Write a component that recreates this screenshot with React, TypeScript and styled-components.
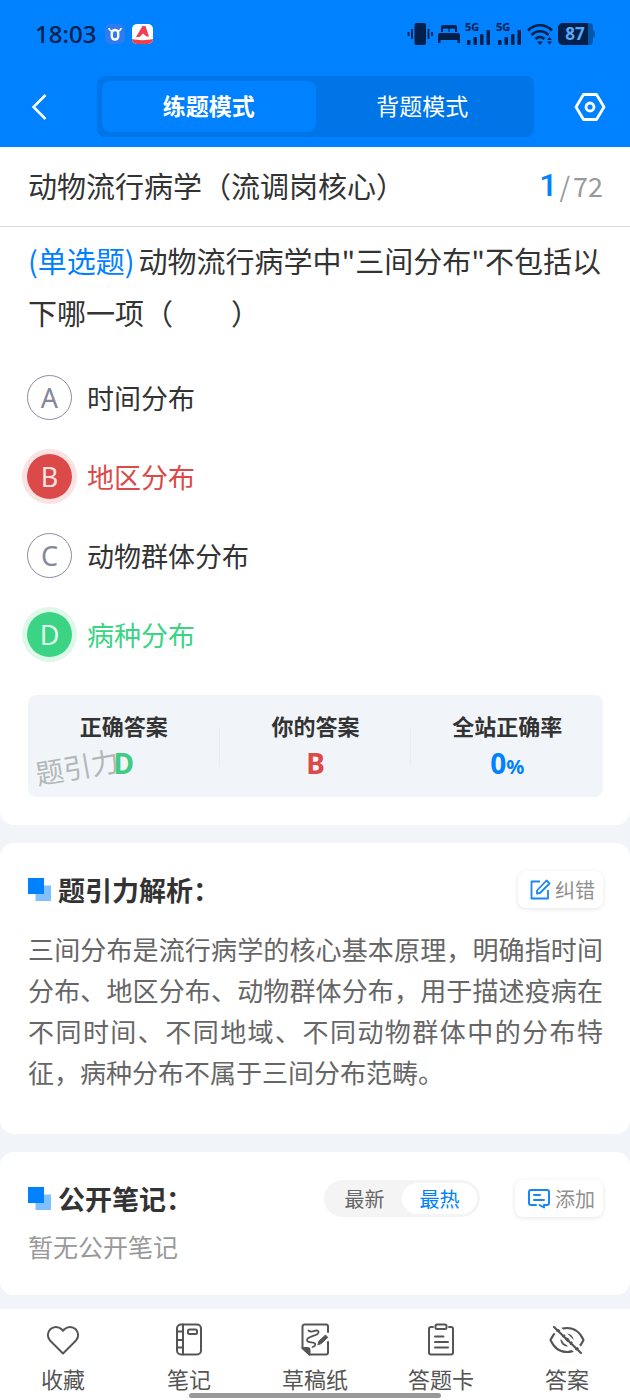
import React, { useState } from 'react';
import styled, { createGlobalStyle, css } from 'styled-components';

const GlobalStyle = createGlobalStyle`
  *, *::before, *::after { box-sizing: border-box; }
  body {
    margin: 0;
    background: #f1f5f9;
    color: #333;
    font-family: "Noto Sans CJK SC", "Noto Sans", sans-serif;
  }
  button {
    margin: 0;
    padding: 0;
    border: 0;
    background: none;
    color: inherit;
    font: inherit;
    cursor: pointer;
  }
  h1, h2, p, dl, dd, dt, fieldset { margin: 0; padding: 0; border: 0; font: inherit; }
  svg { display: block; flex: none; }
`;

const Page = styled.div`
  min-height: 100vh;
  display: flex;
  flex-direction: column;
`;

const Header = styled.header`
  background: #0081ff;
  color: #fff;
`;

const StatusBar = styled.div`
  display: flex;
  align-items: center;
  justify-content: space-between;
  height: 68px;
  padding: 0 35px;
  color: #03204a;
`;

const StatusGroup = styled.div<{ $gap: number }>`
  display: flex;
  align-items: center;
  gap: ${(p) => p.$gap}px;
`;

const Clock = styled.time`
  font: 500 24px/34px "Noto Sans", sans-serif;
`;

const TopNav = styled.div`
  display: grid;
  grid-template-columns: 97px 1fr 96px;
  align-items: center;
  padding: 8px 0 10px;
`;

const IconButton = styled.button<{ $end?: boolean }>`
  justify-self: ${(p) => (p.$end ? 'end' : 'start')};
  padding: 8px 24px;
`;

const ModeTabs = styled.div`
  display: grid;
  grid-template-columns: 1fr 1fr;
  padding: 5px;
  border-radius: 8px;
  background: #0075e7;
`;

const ModeTab = styled.button<{ $active: boolean }>`
  height: 51px;
  padding-bottom: 3px;
  border-radius: 8px;
  font-size: 23px;
  line-height: 34px;
  font-weight: ${(p) => (p.$active ? 700 : 400)};
  background: ${(p) => (p.$active ? '#0081ff' : 'transparent')};
`;

const TitleRow = styled.div`
  display: flex;
  align-items: center;
  justify-content: space-between;
  padding: 17px 27px 19px 28px;
  border-bottom: 1px solid #dcdcdc;
  background: #fff;
`;

const Title = styled.h1`
  font-size: 29px;
  line-height: 43px;
`;

const Counter = styled.div`
  display: flex;
  align-items: center;
  gap: 2px;
  color: #999;
  font-size: 27px;
  line-height: 43px;
`;

const CounterCurrent = styled.span`
  color: #0081ff;
  font: 500 32px/43px Roboto, sans-serif;
`;

const CounterTotal = styled.span`
  display: flex;
  gap: 3px;
`;

const Main = styled.main`
  display: flex;
  flex-direction: column;
  gap: 18px;
  padding-bottom: 14px;
`;

const Card = styled.section<{ $first?: boolean; $bottom: number }>`
  padding: ${(p) => (p.$first ? 7 : 28)}px 27px ${(p) => p.$bottom}px 28px;
  border-radius: ${(p) => (p.$first ? '0 0 14px 14px' : '14px')};
  background: #fff;
`;

const Question = styled.p`
  font-size: 29px;
  line-height: 52px;
`;

const QuestionType = styled.span`
  margin-right: 4px;
  color: #0081ff;
`;

const Options = styled.fieldset`
  display: flex;
  flex-direction: column;
  gap: 34px;
  margin: 37px 0 38px;
`;

type Tone = 'plain' | 'wrong' | 'right';

const Option = styled.label<{ $tone: Tone }>`
  position: relative;
  display: flex;
  align-items: center;
  gap: 15px;
  font-size: 27px;
  line-height: 45px;
  cursor: pointer;
  color: ${(p) => ({ plain: '#333', wrong: '#dc4949', right: '#3ad484' })[p.$tone]};
`;

const OptionInput = styled.input`
  position: absolute;
  width: 44px;
  height: 45px;
  margin: 0;
  opacity: 0;
`;

const OptionBadge = styled.span<{ $tone: Tone }>`
  flex: none;
  width: 45px;
  height: 45px;
  margin-left: -1px;
  border-radius: 50%;
  text-align: center;
  font: 400 27px/45px "Noto Sans", sans-serif;
  ${(p) =>
    p.$tone === 'plain' &&
    css`
      border: 1px solid #8a8ca6;
      line-height: 43px;
      color: #85889c;
    `}
  ${(p) =>
    p.$tone === 'wrong' &&
    css`
      background: #dc4949;
      color: #fbe3e3;
      box-shadow: 0 0 0 5px #fbe2e2;
    `}
  ${(p) =>
    p.$tone === 'right' &&
    css`
      background: #3ad484;
      color: #e3faee;
      box-shadow: 0 0 0 5px #dff8ea;
    `}
`;

const Stats = styled.dl`
  position: relative;
  display: grid;
  grid-template-columns: repeat(3, 1fr);
  padding: 13px 0 12px;
  border-radius: 8px;
  background: #f1f5f9;
`;

const Watermark = styled.span`
  position: absolute;
  left: 7px;
  top: 51px;
  font-size: 28px;
  line-height: 40px;
  color: #b4b7ba;
  transform: rotate(-10deg);
`;

const Stat = styled.div`
  position: relative;
  text-align: center;
  & + &::before {
    content: "";
    position: absolute;
    left: -1px;
    top: 20px;
    width: 1px;
    height: 38px;
    background: #e9edf1;
  }
`;

const StatLabel = styled.dt`
  font-size: 22px;
  line-height: 34px;
  font-weight: 700;
`;

const StatValue = styled.dd<{ $color: string }>`
  height: 43px;
  font: 700 28px/43px "Noto Sans", sans-serif;
  color: ${(p) => p.$color};
`;

const Percent = styled.span`
  font-size: 20px;
  line-height: 20px;
`;

const CardHead = styled.div`
  display: flex;
  align-items: center;
  gap: 35px;
`;

const Heading = styled.h2`
  display: flex;
  align-items: center;
  gap: 7px;
  margin-right: auto;
  font-size: 27px;
  line-height: 37px;
  font-weight: 700;
`;

const ActionButton = styled.button`
  display: flex;
  align-items: center;
  gap: 4px;
  height: 37px;
  padding: 0 8px 0 12px;
  border-radius: 8px;
  background: #fff;
  box-shadow: 0 1px 5px rgba(0, 0, 0, 0.1);
  font-size: 20px;
  line-height: 36px;
  color: #8f8f8f;
`;

const SortSwitch = styled.div`
  display: flex;
  padding: 3px;
  border-radius: 19px;
  background: #f4f4f4;
`;

const SortButton = styled.button<{ $active: boolean }>`
  width: 75px;
  height: 31px;
  border-radius: 16px;
  font-size: 20px;
  line-height: 31px;
  color: ${(p) => (p.$active ? '#0081ff' : '#666')};
  background: ${(p) => (p.$active ? '#fff' : 'transparent')};
`;

const Analysis = styled.p`
  margin-top: 20px;
  font-size: 26px;
  line-height: 41px;
  text-align: justify;
  color: #666;
`;

const EmptyNote = styled.p`
  margin-top: 9px;
  font-size: 25px;
  line-height: 41px;
  color: #999;
`;

const BottomNav = styled.nav`
  position: sticky;
  bottom: 0;
  display: grid;
  grid-template-columns: repeat(5, 1fr);
  margin-top: auto;
  padding: 14px 0 4px;
  background: #fff;
`;

const NavButton = styled.button`
  display: flex;
  flex-direction: column;
  align-items: center;
  gap: 5px;
  padding-bottom: 1px;
  font-size: 22px;
  line-height: 33px;
  color: #555;
`;

const HomeIndicator = styled.span`
  position: absolute;
  left: 30%;
  right: 30%;
  bottom: 2px;
  height: 5px;
  border-radius: 3px;
  background: #999;
`;

const NavSvg = ({ children, w = 34 }: { children: React.ReactNode; w?: number }) => (
  <svg width={w} height="34" viewBox={`0 0 ${w} 34`} fill="none" stroke="#555" strokeWidth="2" strokeLinecap="round" strokeLinejoin="round" aria-hidden="true">
    {children}
  </svg>
);

const HeartIcon = () => (
  <NavSvg>
    <path d="M17 30.5 4 17.5A8.1 8.1 0 0 1 15.6 6.2L17 7.7l1.4-1.5A8.1 8.1 0 0 1 30 17.5Z" />
  </NavSvg>
);

const NotebookIcon = () => (
  <NavSvg>
    <rect x="5" y="1.5" width="24" height="30" rx="4" />
    <path d="M11 1.5v30M5 8.5h6M5 17h6M5 24.5h6" />
    <rect x="16" y="6.5" width="9" height="4.500" rx="1.500" />
  </NavSvg>
);

const DraftIcon = () => (
  <NavSvg>
    <path d="M30 9V3.500a2 2 0 0 0-2-2H6.500a2 2 0 0 0-2 2V25l7 6.500H28a2 2 0 0 0 2-2V19" />
    <path d="M4.500 25h5a2 2 0 0 1 2 2v4.500Z" fill="#555" />
    <path d="M10.500 7.500C14 11 19 5 20.500 8.500 22 13 9 12.500 9 17c0 3.500 6.500 1.500 8 3.500 1 1.500-.5 3-2.500 3.500" strokeWidth="1.800" />
    <path d="m20 21.500 1-3.500 6.500-6 2.300 2.400-6.500 6Z" fill="#555" strokeWidth="1" />
  </NavSvg>
);

const SheetIcon = () => (
  <NavSvg>
    <path d="M9 4H7a2 2 0 0 0-2 2v23.500a2 2 0 0 0 2 2h20a2 2 0 0 0 2-2V6a2 2 0 0 0-2-2h-2" />
    <rect x="11.500" y="1.500" width="11" height="4.500" rx="1.500" />
    <path d="M11 13.500h8.500M11 19h13M11 24.500h13" />
  </NavSvg>
);

const EyeOffIcon = () => (
  <NavSvg w={36}>
    <path d="M1.500 17C5 9 11 5 18 5s13 4 16.500 12C31 25 25 29 18 29S5 25 1.500 17Z" />
    <circle cx="18" cy="17" r="5.500" />
    <circle cx="18" cy="17" r="1.500" fill="#555" />
    <path d="M7.500 2 34 27.500" stroke="#fff" strokeWidth="2.500" />
    <path d="M3.500 6.500 30 32" stroke="#fff" strokeWidth="2.500" />
    <path d="M5 4l27 26" strokeWidth="2.200" />
  </NavSvg>
);

const BackIcon = () => (
  <svg width="30" height="30" viewBox="0 0 30 30" fill="none" stroke="#fff" strokeWidth="2.500" aria-hidden="true">
    <path d="M21.500 3 9.500 15l12 12" />
  </svg>
);

const SettingsIcon = () => (
  <svg width="32" height="30" viewBox="0 0 32 30" fill="none" stroke="#fff" strokeWidth="2.800" strokeLinejoin="round" aria-hidden="true">
    <path d="M9.500 2.500h13L30 15l-7.500 12.500h-13L2 15Z" />
    <circle cx="16" cy="15" r="4" />
  </svg>
);

const EditIcon = () => (
  <svg width="21" height="22" viewBox="0 0 21 22" fill="none" stroke="#1a86f5" strokeWidth="1.800" strokeLinejoin="round" aria-hidden="true">
    <path d="M10 2.500H1.500v17h16.500V11" />
    <path d="m7 11.500 9.500-10 3 3-9.500 9.500-3 .5Z" />
  </svg>
);

const NoteIcon = () => (
  <svg width="24" height="22" viewBox="0 0 24 22" fill="none" stroke="#1a86f5" strokeWidth="2" strokeLinecap="round" strokeLinejoin="round" aria-hidden="true">
    <path d="M9 17H4a2 2 0 0 1-2-2V4a2 2 0 0 1 2-2h16a2 2 0 0 1 2 2v11a2 2 0 0 1-2 2h-3v2.500L12.500 17" />
    <path d="M7 7h6M7 12h10" />
  </svg>
);

const SquaresMark = () => (
  <svg width="23" height="23" viewBox="0 0 23 23" aria-hidden="true">
    <rect x="7.500" y="7.500" width="15.500" height="15.500" fill="#80c0ff" />
    <rect width="16" height="16" fill="#0081ff" />
  </svg>
);

const BullAppIcon = () => (
  <svg width="20" height="20" viewBox="0 0 20 20" aria-hidden="true">
    <rect width="20" height="20" rx="5" fill="#2f7bf0" />
    <rect x="6.800" y="6" width="6.400" height="9.500" rx="3" fill="none" stroke="#fff" strokeWidth="2.400" />
    <path d="M4 4c.3 2.300 1.500 3.200 3.500 3M16 4c-.3 2.300-1.500 3.200-3.500 3" fill="none" stroke="#fff" strokeWidth="1.600" />
  </svg>
);

const RedAppIcon = () => (
  <svg width="21" height="20" viewBox="0 0 21 20" aria-hidden="true">
    <rect width="21" height="20" rx="5" fill="#fff" />
    <path d="M0 15c6 1.500 15 1.500 21 0a5 5 0 0 1-5 5H5a5 5 0 0 1-5-5Z" fill="#ee4049" />
    <path d="M4 13 10.500 2h3L17 12.500h-2.500l-3.500-3-3.500 3.500Z" fill="#ee3f55" />
  </svg>
);

const VibrateIcon = () => (
  <svg width="26" height="22" viewBox="0 0 26 22" aria-hidden="true">
    <rect x="7.500" y="0" width="11.500" height="22" rx="2" fill="#03204a" />
    <path d="M5 6v10M1.500 9v4M21.500 6v10M25 9v4" stroke="#03204a" strokeWidth="1.800" />
  </svg>
);

const BedIcon = () => (
  <svg width="22" height="18" viewBox="0 0 22 18" fill="#03204a" aria-hidden="true">
    <path d="M3 7V2a2 2 0 0 1 2-2h12a2 2 0 0 1 2 2v5h-2V4.500a1 1 0 0 0-1-1h-3.500a1 1 0 0 0-1 1V7h-1V4.500a1 1 0 0 0-1-1H6a1 1 0 0 0-1 1V7Z" />
    <path d="M0 18v-8a2 2 0 0 1 2-2h18a2 2 0 0 1 2 2v8h-2.500v-3h-17v3Z" />
  </svg>
);

const SignalIcon = () => (
  <svg width="26" height="32" viewBox="0 -5 26 32" fill="#03204a" aria-hidden="true">
    <text x="0" y="8" fontFamily="Noto Sans" fontSize="11" fontWeight="700">5G</text>
    <rect x="2" y="17" width="3.500" height="5" rx="1" />
    <rect x="8.500" y="14" width="3.500" height="8" rx="1" />
    <rect x="15" y="11" width="3.500" height="11" rx="1" />
    <rect x="21.500" y="7" width="3.500" height="15" rx="1" />
  </svg>
);

const WifiIcon = () => (
  <svg width="26" height="22" viewBox="0 0 26 22" aria-hidden="true">
    <path d="M1 7.500C7.500.5 18.500.5 25 7.500M4.500 12c5-5 12-5 17 0M8.500 16c2.700-2.500 6.300-2.500 9 0" fill="none" stroke="#03204a" strokeWidth="2.600" />
    <path d="M10 18.500h6L13 22ZM20 17l2.500-3 2.500 3ZM20 18.500h5l-2.500 3Z" fill="#03204a" />
  </svg>
);

const BatteryIcon = () => (
  <svg width="37" height="22" viewBox="0 0 37 22" aria-hidden="true">
    <path d="M5 0h26a4 4 0 0 1 4 4v3a4 4 0 0 1 2 4 4 4 0 0 1-2 4v3a4 4 0 0 1-4 4H5a5 5 0 0 1-5-5V5a5 5 0 0 1 5-5Z" fill="#0257aa" />
    <path d="M5 0h25v22H5a5 5 0 0 1-5-5V5a5 5 0 0 1 5-5Z" fill="#03204a" />
    <text x="17" y="17" textAnchor="middle" fontFamily="Noto Sans" fontSize="17" fontWeight="700" fill="#5aa9f7">87</text>
  </svg>
);

const OPTIONS: { key: string; text: string; tone: Tone }[] = [
  { key: 'A', text: '时间分布', tone: 'plain' },
  { key: 'B', text: '地区分布', tone: 'wrong' },
  { key: 'C', text: '动物群体分布', tone: 'plain' },
  { key: 'D', text: '病种分布', tone: 'right' },
];

const NAV_ITEMS = [
  { label: '收藏', Icon: HeartIcon },
  { label: '笔记', Icon: NotebookIcon },
  { label: '草稿纸', Icon: DraftIcon },
  { label: '答题卡', Icon: SheetIcon },
  { label: '答案', Icon: EyeOffIcon },
];

export default function App() {
  const [mode, setMode] = useState('练题模式');
  const [sort, setSort] = useState('最热');
  const [picked, setPicked] = useState('B');

  return (
    <Page>
      <GlobalStyle />
      <Header>
        <StatusBar>
          <StatusGroup $gap={9}>
            <Clock>18:03</Clock>
            <StatusGroup $gap={7}>
              <BullAppIcon />
              <RedAppIcon />
            </StatusGroup>
          </StatusGroup>
          <StatusGroup $gap={5}>
            <VibrateIcon />
            <BedIcon />
            <SignalIcon />
            <SignalIcon />
            <WifiIcon />
            <BatteryIcon />
          </StatusGroup>
        </StatusBar>
        <TopNav>
          <IconButton aria-label="返回"><BackIcon /></IconButton>
          <ModeTabs role="tablist">
            {['练题模式', '背题模式'].map((m) => (
              <ModeTab key={m} role="tab" aria-selected={mode === m} $active={mode === m} onClick={() => setMode(m)}>
                {m}
              </ModeTab>
            ))}
          </ModeTabs>
          <IconButton $end aria-label="设置"><SettingsIcon /></IconButton>
        </TopNav>
      </Header>

      <TitleRow>
        <Title>动物流行病学（流调岗核心）</Title>
        <Counter>
          <CounterCurrent>1</CounterCurrent>
          <CounterTotal><span>/</span><span>72</span></CounterTotal>
        </Counter>
      </TitleRow>

      <Main>
        <Card $first $bottom={28}>
          <Question>
            <QuestionType>(单选题)</QuestionType>
            动物流行病学中"三间分布"不包括以下哪一项（　　）
          </Question>
          <Options>
            {OPTIONS.map((o) => (
              <Option key={o.key} $tone={o.tone}>
                <OptionInput type="radio" name="answer" checked={picked === o.key} onChange={() => setPicked(o.key)} />
                <OptionBadge $tone={o.tone}>{o.key}</OptionBadge>
                {o.text}
              </Option>
            ))}
          </Options>
          <Stats>
            <Watermark aria-hidden="true">题引力</Watermark>
            <Stat>
              <StatLabel>正确答案</StatLabel>
              <StatValue $color="#3ecb82">D</StatValue>
            </Stat>
            <Stat>
              <StatLabel>你的答案</StatLabel>
              <StatValue $color="#dc4949">B</StatValue>
            </Stat>
            <Stat>
              <StatLabel>全站正确率</StatLabel>
              <StatValue $color="#0081ff">0<Percent>%</Percent></StatValue>
            </Stat>
          </Stats>
        </Card>

        <Card $bottom={42}>
          <CardHead>
            <Heading><SquaresMark />题引力解析：</Heading>
            <ActionButton><EditIcon />纠错</ActionButton>
          </CardHead>
          <Analysis>
            三间分布是流行病学的核心基本原理，明确指时间分布、地区分布、动物群体分布，用于描述疫病在不同时间、不同地域、不同动物群体中的分布特征，病种分布不属于三间分布范畴。
          </Analysis>
        </Card>

        <Card $bottom={28}>
          <CardHead>
            <Heading><SquaresMark />公开笔记：</Heading>
            <SortSwitch>
              {['最新', '最热'].map((s) => (
                <SortButton key={s} aria-pressed={sort === s} $active={sort === s} onClick={() => setSort(s)}>
                  {s}
                </SortButton>
              ))}
            </SortSwitch>
            <ActionButton><NoteIcon />添加</ActionButton>
          </CardHead>
          <EmptyNote>暂无公开笔记</EmptyNote>
        </Card>
      </Main>

      <BottomNav>
        {NAV_ITEMS.map(({ label, Icon }) => (
          <NavButton key={label}>
            <Icon />
            {label}
          </NavButton>
        ))}
        <HomeIndicator />
      </BottomNav>
    </Page>
  );
}
